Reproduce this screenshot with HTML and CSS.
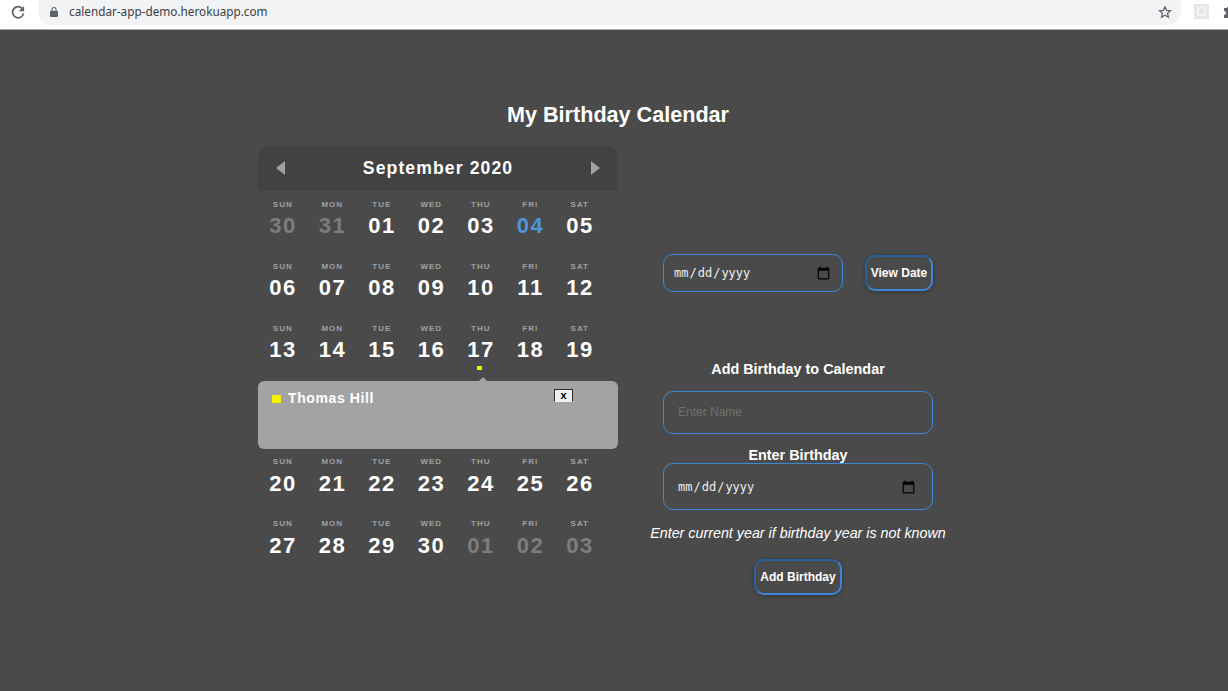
FILE: index.html
```html
<!DOCTYPE html>
<html lang="en">

<head>
  <meta charset="UTF-8">
  <meta name="viewport" content="width=device-width, initial-scale=1.0">
  <title>My Birthday Calendar</title>
  <link rel="stylesheet" href="styles.css">
</head>

<body>
  <div class="toolbar">
    <svg class="reload" width="14" height="14" viewBox="0 0 16 16">
      <path d="M13.300 4.700A6.300 6.300 0 1 0 14.300 9.500" fill="none" stroke="#5f6368" stroke-width="2" />
      <path d="M15 1v6.200H8.800z" fill="#5f6368" />
    </svg>
    <div class="omnibox">
      <svg class="lock" width="8" height="10" viewBox="0 0 9 11">
        <path d="M1 4h.6V2.9a2.9 2.9 0 0 1 5.8 0V4H8a1 1 0 0 1 1 1v5a1 1 0 0 1-1 1H1a1 1 0 0 1-1-1V5a1 1 0 0 1 1-1zm1.700 0h3.600V2.900a1.800 1.800 0 0 0-3.600 0z" fill="#5f6368" />
      </svg>
      <span class="url">calendar-app-demo.herokuapp.com</span>
      <svg class="star" width="14" height="14" viewBox="0 0 24 24">
        <path d="M12 3l2.700 6.200 6.800.6-5.100 4.500 1.500 6.700L12 17.500 6.100 21l1.500-6.700L2.500 9.800l6.800-.6z" fill="none" stroke="#5f6368" stroke-width="2.200" />
      </svg>
    </div>
    <svg class="ext-box" width="15" height="15" viewBox="0 0 15 15">
      <rect width="15" height="15" fill="#e6e6e6" />
      <circle cx="7.500" cy="7.500" r="4" fill="none" stroke="#f6f6f6" stroke-width="2" />
      <path d="M2 2l2 2M13 2l-2 2M2 13l2-2M13 13l-2-2" stroke="#f6f6f6" />
    </svg>
    <svg class="puzzle" width="16" height="16" viewBox="0 0 16 16">
      <path d="M1 4h3a2 2 0 0 1 4 0h3v3a2 2 0 0 1 0 4v3H1v-3a2 2 0 0 0 0-4z" fill="#5f6368" />
    </svg>
  </div>

  <h1 class="title">My Birthday Calendar</h1>

  <div class="main">
    <div class="calendar">
      <div class="cal-header">
        <div class="arrow arrow-left"></div>
        <h2 class="cal-month">September 2020</h2>
        <div class="arrow arrow-right"></div>
      </div>

      <div class="week">
        <div class="day other"><span class="day-name">SUN</span><span class="day-num">30</span></div>
        <div class="day other"><span class="day-name">MON</span><span class="day-num">31</span></div>
        <div class="day"><span class="day-name">TUE</span><span class="day-num">01</span></div>
        <div class="day"><span class="day-name">WED</span><span class="day-num">02</span></div>
        <div class="day"><span class="day-name">THU</span><span class="day-num">03</span></div>
        <div class="day today"><span class="day-name">FRI</span><span class="day-num">04</span></div>
        <div class="day"><span class="day-name">SAT</span><span class="day-num">05</span></div>
      </div>
      <div class="week">
        <div class="day"><span class="day-name">SUN</span><span class="day-num">06</span></div>
        <div class="day"><span class="day-name">MON</span><span class="day-num">07</span></div>
        <div class="day"><span class="day-name">TUE</span><span class="day-num">08</span></div>
        <div class="day"><span class="day-name">WED</span><span class="day-num">09</span></div>
        <div class="day"><span class="day-name">THU</span><span class="day-num">10</span></div>
        <div class="day"><span class="day-name">FRI</span><span class="day-num">11</span></div>
        <div class="day"><span class="day-name">SAT</span><span class="day-num">12</span></div>
      </div>
      <div class="week">
        <div class="day"><span class="day-name">SUN</span><span class="day-num">13</span></div>
        <div class="day"><span class="day-name">MON</span><span class="day-num">14</span></div>
        <div class="day"><span class="day-name">TUE</span><span class="day-num">15</span></div>
        <div class="day"><span class="day-name">WED</span><span class="day-num">16</span></div>
        <div class="day"><span class="day-name">THU</span><span class="day-num">17</span><span class="event-dot"></span></div>
        <div class="day"><span class="day-name">FRI</span><span class="day-num">18</span></div>
        <div class="day"><span class="day-name">SAT</span><span class="day-num">19</span></div>
      </div>

      <div class="details">
        <span class="details-mark"></span>
        <span class="details-name">Thomas Hill</span>
        <button class="details-close">x</button>
      </div>

      <div class="week">
        <div class="day"><span class="day-name">SUN</span><span class="day-num">20</span></div>
        <div class="day"><span class="day-name">MON</span><span class="day-num">21</span></div>
        <div class="day"><span class="day-name">TUE</span><span class="day-num">22</span></div>
        <div class="day"><span class="day-name">WED</span><span class="day-num">23</span></div>
        <div class="day"><span class="day-name">THU</span><span class="day-num">24</span></div>
        <div class="day"><span class="day-name">FRI</span><span class="day-num">25</span></div>
        <div class="day"><span class="day-name">SAT</span><span class="day-num">26</span></div>
      </div>
      <div class="week">
        <div class="day"><span class="day-name">SUN</span><span class="day-num">27</span></div>
        <div class="day"><span class="day-name">MON</span><span class="day-num">28</span></div>
        <div class="day"><span class="day-name">TUE</span><span class="day-num">29</span></div>
        <div class="day"><span class="day-name">WED</span><span class="day-num">30</span></div>
        <div class="day other"><span class="day-name">THU</span><span class="day-num">01</span></div>
        <div class="day other"><span class="day-name">FRI</span><span class="day-num">02</span></div>
        <div class="day other"><span class="day-name">SAT</span><span class="day-num">03</span></div>
      </div>
    </div>

    <div class="side">
      <div class="view-row">
        <input class="field view-date" type="date">
        <button class="btn view-btn">View Date</button>
      </div>

      <h3 class="add-title">Add Birthday to Calendar</h3>
      <input class="field name-input" type="text" placeholder="Enter Name">
      <h3 class="birth-label">Enter Birthday</h3>
      <input class="field birth-date" type="date">
      <p class="note">Enter current year if birthday year is not known</p>
      <button class="btn add-btn">Add Birthday</button>
    </div>
  </div>
</body>

</html>
```

FILE: styles.css
```css
* {
  margin: 0;
  padding: 0;
  box-sizing: border-box;
}

body {
  height: 691px;
  overflow: hidden;
  background-color: #4a4a4a;
  font-family: "Liberation Sans", Arial, sans-serif;
  color: #fff;
}

.toolbar {
  display: flex;
  align-items: flex-start;
  height: 30px;
  background-color: #fff;
  border-bottom: 1px solid #a8a8a8;
  overflow: hidden;
}

.reload {
  flex: none;
  margin: 5px 0 0 11px;
}

.omnibox {
  flex: none;
  display: flex;
  align-items: center;
  width: 1143px;
  height: 25px;
  margin-left: 13px;
  padding: 0 9px 2px 12px;
  background-color: #f1f3f4;
  border-radius: 0 0 13px 13px;
}

.lock {
  flex: none;
}

.url {
  flex: 1;
  margin: 0 0 1px 11px;
  font-family: "Noto Sans", sans-serif;
  font-size: 11.750px;
  color: #3c4043;
}

.ext-box {
  flex: none;
  margin: 4px 0 0 13px;
}

.puzzle {
  flex: none;
  margin: 4px 0 0 14px;
}

.title {
  margin-top: 72px;
  height: 44px;
  padding-left: 8px;
  text-align: center;
  font-size: 21.600px;
  line-height: 26px;
  font-weight: bold;
}

.main {
  display: flex;
  margin-left: 258px;
}

.calendar {
  flex: none;
  width: 360px;
}

.cal-header {
  display: flex;
  align-items: center;
  justify-content: space-between;
  height: 45px;
  padding: 0 18px 1px;
  background-color: #424242;
  border-radius: 10px 10px 0 0;
}

.cal-month {
  font-size: 17.600px;
  font-weight: bold;
  letter-spacing: 1.100px;
}

.arrow {
  width: 0;
  height: 0;
  border-top: 7px solid transparent;
  border-bottom: 7px solid transparent;
}

.arrow-left {
  border-right: 9px solid #a0a0a0;
}

.arrow-right {
  border-left: 9px solid #a0a0a0;
}

.week {
  display: grid;
  grid-template-columns: repeat(7, 49.500px);
  height: 62px;
}

.day {
  position: relative;
  display: flex;
  flex-direction: column;
  align-items: center;
  padding-top: 9px;
}

.day-name {
  font-size: 8px;
  line-height: 9px;
  font-weight: bold;
  letter-spacing: 1px;
  color: #a0a0a0;
}

.day-num {
  margin-top: 4px;
  padding-left: 0.500px;
  font-size: 22px;
  line-height: 25px;
  font-weight: bold;
  letter-spacing: 1.500px;
}

/* rows under the open details panel sit a little further apart */
.details ~ .week .day-num {
  margin-top: 5px;
}

.day.other .day-num {
  color: #7d7d7d;
}

.day.today .day-num {
  color: #4f93dc;
}

.event-dot {
  position: absolute;
  left: 21px;
  top: 51px;
  width: 5px;
  height: 4px;
  background-color: #f4f400;
}

.details {
  position: relative;
  display: flex;
  align-items: flex-start;
  height: 68px;
  margin: 4px 0 -1px;
  padding: 10px 14px;
  background-color: #a3a3a3;
  border-radius: 6px;
}

/* little notch pointing at the selected day */
.details::before {
  content: "";
  position: absolute;
  left: 221px;
  top: -4px;
  border-left: 4px solid transparent;
  border-right: 4px solid transparent;
  border-bottom: 4px solid #a3a3a3;
}

.details-mark {
  width: 9px;
  height: 8px;
  margin-top: 4px;
  background-color: #f4f400;
}

.details-name {
  margin-left: 7px;
  font-size: 14px;
  line-height: 14px;
  font-weight: bold;
  letter-spacing: 0.600px;
}

.details-close {
  position: absolute;
  left: 296px;
  top: 8px;
  width: 19px;
  height: 13px;
  padding-top: 1px;
  font-family: "Liberation Mono", monospace;
  font-size: 11px;
  line-height: 9px;
  font-weight: bold;
  color: #000;
  background-color: #efefef;
  border: 1px solid #2a2a2a;
  border-bottom-color: #efefef;
}

.side {
  flex: none;
  display: flex;
  flex-direction: column;
  align-items: center;
  width: 300px;
  margin-left: 30px;
}

.view-row {
  display: flex;
  align-items: center;
  justify-content: space-between;
  width: 270px;
  margin-top: 108px;
}

.field {
  background-color: transparent;
  border: 1px solid #3b86d8;
  border-radius: 10px;
  color: #eee;
}

.field::-webkit-calendar-picker-indicator {
  width: 15px;
  height: 15px;
  padding: 1px;
}

.view-date {
  width: 180px;
  height: 38px;
  padding: 0 10px 0 9px;
  font-family: "DejaVu Sans Mono", monospace;
  font-size: 12px;
}

.btn {
  height: 36px;
  font-family: "Liberation Sans", Arial, sans-serif;
  font-size: 12px;
  font-weight: bold;
  color: #fff;
  background-color: transparent;
  border: 2px solid;
  border-color: #2a5f9e #3b86d8 #3b86d8 #2a5f9e;
  border-radius: 10px;
  box-shadow: 0 1px 5px rgba(0, 0, 0, 0.3);
}

.view-btn {
  width: 68px;
}

.add-title {
  margin-top: 68px;
  font-size: 14.400px;
  line-height: 18px;
}

.name-input {
  width: 270px;
  height: 43px;
  margin-top: 13px;
  padding: 0 14px 2px;
  font-family: "Liberation Sans", Arial, sans-serif;
  font-size: 12px;
}

.name-input::placeholder {
  color: #6f6f6f;
}

.birth-label {
  margin-top: 13px;
  margin-bottom: -1px;
  font-size: 14.400px;
  line-height: 17px;
}

.birth-date {
  width: 270px;
  height: 47px;
  padding: 1px 15px 0 13px;
  font-family: "DejaVu Sans Mono", monospace;
  font-size: 12px;
}

.note {
  margin-top: 14px;
  font-size: 14.300px;
  line-height: 18px;
  font-style: italic;
}

.add-btn {
  width: 88px;
  height: 36px;
  margin-top: 17px;
}
```
